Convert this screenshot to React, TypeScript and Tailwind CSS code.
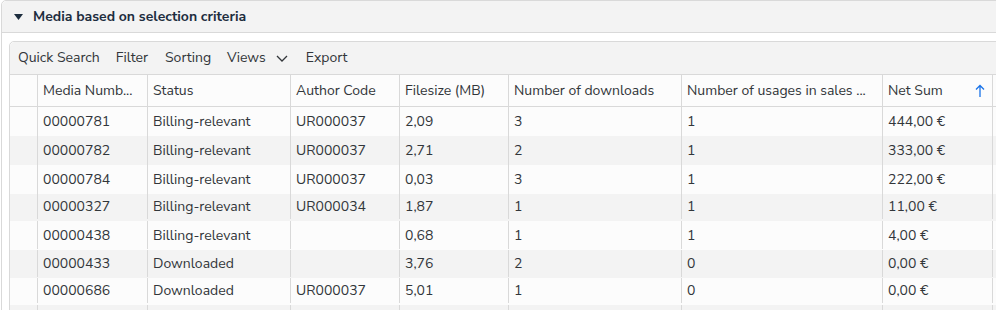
import React from "react";

const rows = [
  { h: "h-[29px]", bg: "bg-[#fcfcfc]", c: ["00000781", "Billing-relevant", "UR000037", "2,09", "3", "1", "444,00 €"] },
  { h: "h-[29px]", bg: "bg-[#f3f3f3]", c: ["00000782", "Billing-relevant", "UR000037", "2,71", "2", "1", "333,00 €"] },
  { h: "h-[29px]", bg: "bg-[#fcfcfc]", c: ["00000784", "Billing-relevant", "UR000037", "0,03", "3", "1", "222,00 €"] },
  { h: "h-[27px] pb-[2px]", bg: "bg-[#f3f3f3]", c: ["00000327", "Billing-relevant", "UR000034", "1,87", "1", "1", "11,00 €"] },
  { h: "h-[29px] pb-px", bg: "bg-[#fcfcfc]", c: ["00000438", "Billing-relevant", "", "0,68", "1", "1", "4,00 €"] },
  { h: "h-[28px] pb-px", bg: "bg-[#f3f3f3]", c: ["00000433", "Downloaded", "", "3,76", "2", "0", "0,00 €"] },
  { h: "h-[27px] pb-[2px]", bg: "bg-[#fcfcfc]", c: ["00000686", "Downloaded", "UR000037", "5,01", "1", "0", "0,00 €"] },
  { h: "h-[27px]", bg: "bg-[#f3f3f3]", c: ["", "", "", "", "", "", ""] },
];

const widths = ["w-[110px]", "w-[143px]", "w-[109px]", "w-[109px]", "w-[173px]", "w-[201px]", "w-[110px]"];

const headers = ["Media Numb...", "Status", "Author Code", "Filesize (MB)", "Number of downloads", "Number of usages in sales ...", "Net Sum"];

export default function App() {
  return (
    <div
      className="w-[996px] h-[310px] overflow-hidden bg-white text-[14px] text-[#32363a]"
      style={{ fontFamily: '"Nunito Sans", Lato, "Open Sans", sans-serif' }}
    >
      <div className="ml-px w-[1010px] h-[320px] border border-[#d9d9d9] rounded-tl-[5px] bg-white">
        <div className="h-[32px] bg-[#f3f3f3] border-b border-[#d9d9d9] flex items-center rounded-tl-[5px]">
          <svg width="9" height="6" viewBox="0 0 9 6" className="ml-[12px] mt-px">
            <polygon points="0,0 9,0 4.5,6" fill="#1d2d3e" />
          </svg>
          <span className="ml-[10px] font-bold text-[#1d2d3e] text-[14px]">Media based on selection criteria</span>
        </div>
        <div className="ml-[7px] mt-[8px] border border-[#d9d9d9] rounded-tl-[5px] w-[1000px]">
          <div className="h-[33px] pb-px bg-[#f3f3f3] border-b border-[#d9d9d9] flex items-center pl-[8px] rounded-tl-[5px]">
            <span>Quick Search</span>
            <span className="ml-[16px]">Filter</span>
            <span className="ml-[17px]">Sorting</span>
            <span className="ml-[16px]">Views</span>
            <svg width="12" height="7" viewBox="0 0 12 7" className="ml-[10px] mt-px">
              <polyline points="1,1 6,6 11,1" fill="none" stroke="#32363a" strokeWidth="1.3" />
            </svg>
            <span className="ml-[18px]">Export</span>
          </div>
          <div className="h-[32px] flex border-b border-[#d9d9d9] bg-[#fcfcfc]">
            <div className="w-[27px] shrink-0" />
            {headers.map((h, i) => (
              <div key={i} className={`${widths[i]} shrink-0 border-l border-[#d9d9d9] pl-[5px] flex items-center justify-between whitespace-nowrap overflow-hidden`}>
                <span>{h}</span>
                {i === 6 && (
                  <svg width="10" height="14" viewBox="0 0 10 14" className="mr-[7px]">
                    <path d="M5 13V1.5M1 5.5L5 1.5L9 5.5" fill="none" stroke="#1a73e8" strokeWidth="1.3" />
                  </svg>
                )}
              </div>
            ))}
            <div className="flex-1 border-l border-[#d9d9d9]" />
          </div>
          {rows.map((r, ri) => (
            <div key={ri} className={`${r.h} ${r.bg} flex`}>
              <div className="w-[27px] shrink-0" />
              {r.c.map((v, i) => (
                <div key={i} className={`${widths[i]} shrink-0 border-l border-[#d9d9d9] pl-[5px] flex items-center whitespace-nowrap`}>
                  {v}
                </div>
              ))}
              <div className="flex-1 border-l border-[#d9d9d9]" />
            </div>
          ))}
        </div>
      </div>
    </div>
  );
}
